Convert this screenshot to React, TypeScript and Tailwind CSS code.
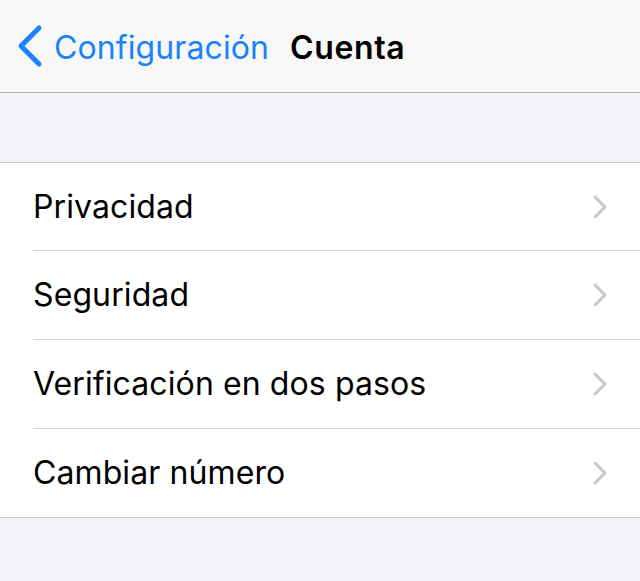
import React from "react";

const rows = [
  { t: "Privacidad", h: "h-[88px]", b: true },
  { t: "Seguridad", h: "h-[89px]", b: true },
  { t: "Verificación en dos pasos", h: "h-[89px]", b: true },
  { t: "Cambiar número", h: "h-[88px]", b: false },
];

function Chevron() {
  return (
    <svg width="16" height="26" viewBox="0 0 16 26" className="shrink-0">
      <path d="M3 3 L13 13 L3 23" fill="none" stroke="#c7c7cc" strokeWidth="3" strokeLinecap="round" strokeLinejoin="round" />
    </svg>
  );
}

export default function App() {
  return (
    <div className="w-[640px] h-[581px] bg-[#f2f2f7] overflow-hidden" style={{ fontFamily: "Inter, 'Noto Sans', sans-serif" }}>
      <div className="h-[93px] bg-[#f7f7f7] border-b border-[#b5b5b5] flex items-center pt-[3px]">
        <div className="flex items-center pl-[16px] text-[#1a82fb]">
          <svg width="28" height="44" viewBox="0 0 28 44" className="-mt-[3px]">
            <path d="M23 4 L5 22 L23 40" fill="none" stroke="#1a82fb" strokeWidth="5" strokeLinecap="round" strokeLinejoin="round" />
          </svg>
          <span className="ml-[10px] text-[32px] leading-none tracking-[0.1px]">Configuración</span>
        </div>
        <span className="ml-[21px] text-[32px] font-semibold leading-none text-black tracking-[0.6px]">Cuenta</span>
      </div>
      <div className="h-[69px]" />
      <div className="bg-white border-t border-b border-[#cfcfd3]">
        {rows.map((r) => (
          <div key={r.t} className="pl-[33px]">
            <div className={`${r.h} flex items-center pr-[32px] ${r.b ? "border-b border-[#d4d4d8]" : ""}`}>
              <span className="flex-1 text-[32px] text-black leading-none tracking-[0.1px]">{r.t}</span>
              <Chevron />
            </div>
          </div>
        ))}
      </div>
    </div>
  );
}
